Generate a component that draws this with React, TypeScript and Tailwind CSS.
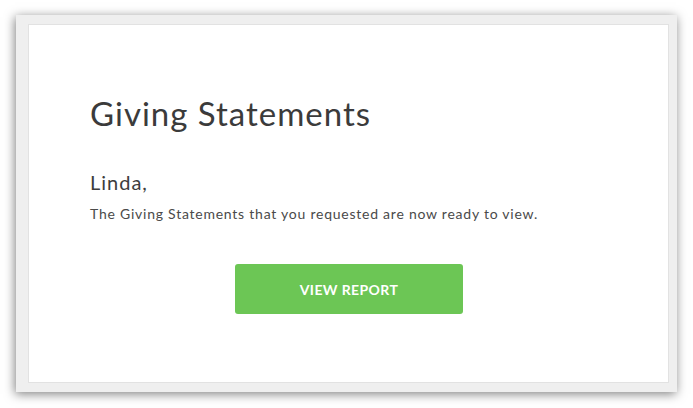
import React from 'react';

/** Giving Statements — email notification card */
export default function App() {
    return (
        <div className="w-[693px] h-[408px] bg-white pt-[15px] pl-[16px]" style={{ fontFamily: 'Lato, "Open Sans", sans-serif' }}>
            {/* Outer frame */}
            <div className="w-[661px] h-[377px] bg-[#efefef] pl-[12px] pr-[8px] pt-[9px] pb-[9px] shadow-[-1px_2px_10px_rgba(0,0,0,0.5)] flex flex-col">
                {/* Email body */}
                <div className="flex-1 bg-white border border-[#e2e2e2] flex flex-col pl-[61px] pt-[68px]">
                    <h1 className="text-[33px] leading-[40px] text-[#3b3b3b] tracking-[1px]">Giving Statements</h1>

                    <p className="mt-[37px] text-[20px] leading-[24px] text-[#3d3d3d] tracking-[1px]">Linda,</p>

                    <p className="mt-[10px] text-[14px] leading-[20px] text-[#4a4a4a] tracking-[0.76px]">
                        The Giving Statements that you requested are now ready to view.
                    </p>

                    {/* Button */}
                    <div className="mt-[40px] pl-[145px]">
                        <button className="w-[228px] h-[50px] rounded-[3px] bg-[#6cc655] text-white text-[14px] font-bold tracking-[0.4px]">
                            VIEW REPORT
                        </button>
                    </div>
                </div>
            </div>
        </div>
    );
}
